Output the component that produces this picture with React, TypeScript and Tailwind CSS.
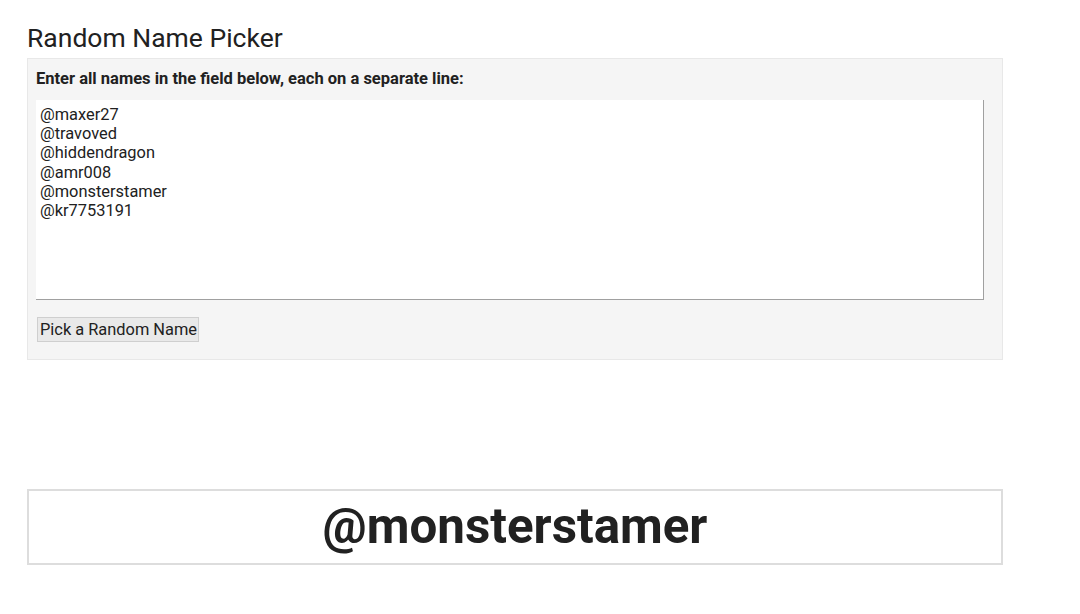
import React, { useState } from "react";

const initialNames = [
  "@maxer27",
  "@travoved",
  "@hiddendragon",
  "@amr008",
  "@monsterstamer",
  "@kr7753191",
].join("\n");

export default function App() {
  const [names, setNames] = useState(initialNames);
  const [winner, setWinner] = useState("@monsterstamer");

  const pick = () => {
    const list = names
      .split("\n")
      .map((n) => n.trim())
      .filter(Boolean);
    if (list.length) setWinner(list[Math.floor(Math.random() * list.length)]);
  };

  return (
    <div className="min-h-screen bg-white font-['Roboto',sans-serif] text-[#212121]">
      <div className="w-[976px] ml-[27px] pt-[20px]">
        {/* Header */}
        <h1 className="text-[26.5px] leading-[36px] text-[#212121] mb-[2px]">Random Name Picker</h1>

        {/* Input panel */}
        <div className="bg-[#f5f5f5] border border-[#e8e8e8] px-[8px] pt-[10px] pb-[17px]">
          <label htmlFor="names" className="block text-[16.5px] font-bold leading-[19px] mb-[12px]">
            Enter all names in the field below, each on a separate line:
          </label>
          <textarea
            id="names"
            value={names}
            onChange={(e) => setNames(e.target.value)}
            className="block w-[948px] h-[200px] bg-white border-r border-b border-[#a0a0a0] pl-[4px] pt-[5px] text-[16.4px] leading-[19.2px] text-[#212121] resize-none outline-none"
          />
          <button
            onClick={pick}
            className="mt-[17px] ml-[1px] h-[25px] pl-[2px] pr-[1px] bg-[#e9e9e9] border border-[#cfcfcf] text-[16.4px] leading-[19px] text-[#212121]"
          >
            Pick a Random Name
          </button>
        </div>

        {/* Result */}
        <div className="mt-[129px] h-[76px] border-2 border-[#dddddd] flex items-center justify-center">
          <span className="text-[49.3px] font-bold leading-none text-[#212121]">{winner}</span>
        </div>
      </div>
    </div>
  );
}
